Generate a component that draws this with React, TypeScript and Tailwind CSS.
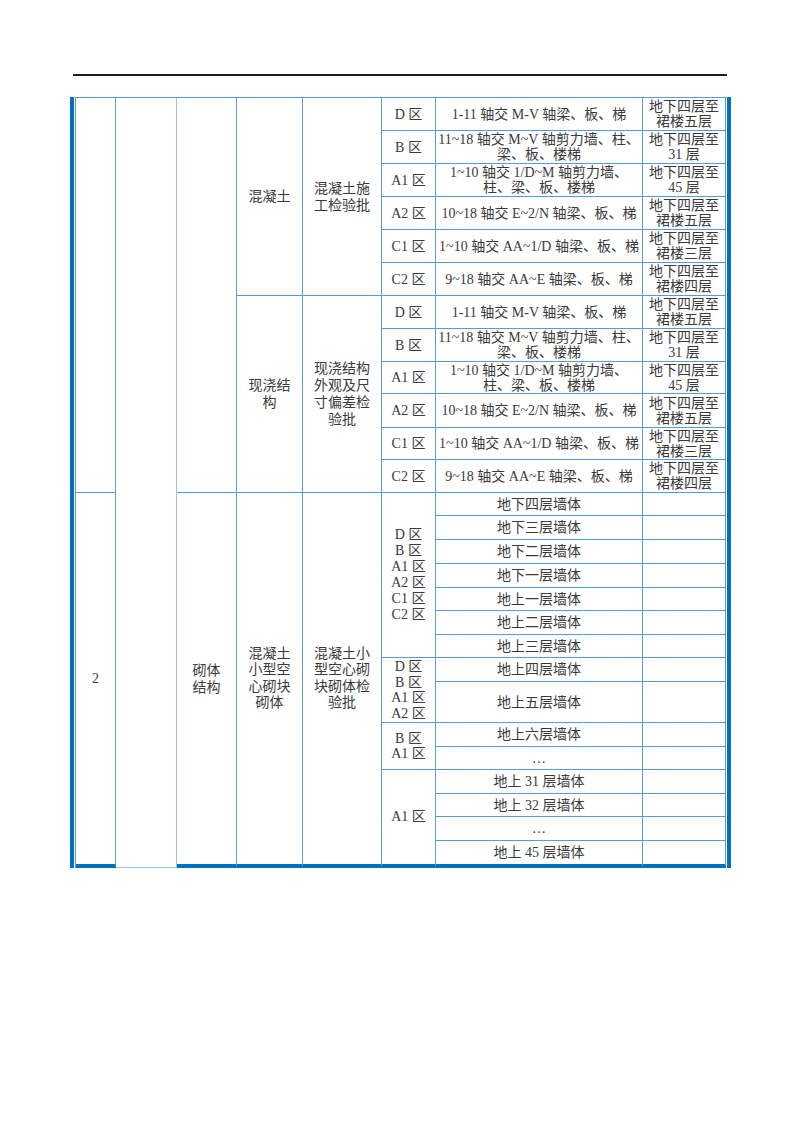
import React from "react";

interface ZoneRow {
  zone: string;
  scope: string[];
  floors: string[];
}

// the six zones repeat in both concrete groups
const zoneRows: ZoneRow[] = [
  { zone: "D 区", scope: ["1-11 轴交 M-V 轴梁、板、梯"], floors: ["地下四层至", "裙楼五层"] },
  { zone: "B 区", scope: ["11~18 轴交 M~V 轴剪力墙、柱、", "梁、板、楼梯"], floors: ["地下四层至", "31 层"] },
  { zone: "A1 区", scope: ["1~10 轴交 1/D~M 轴剪力墙、", "柱、梁、板、楼梯"], floors: ["地下四层至", "45 层"] },
  { zone: "A2 区", scope: ["10~18 轴交 E~2/N 轴梁、板、梯"], floors: ["地下四层至", "裙楼五层"] },
  { zone: "C1 区", scope: ["1~10 轴交 AA~1/D 轴梁、板、梯"], floors: ["地下四层至", "裙楼三层"] },
  { zone: "C2 区", scope: ["9~18 轴交 AA~E 轴梁、板、梯"], floors: ["地下四层至", "裙楼四层"] },
];

const groupHeights = [
  ["h-[33px]", "h-[33px]", "h-[33px]", "h-[33px]", "h-[33px]", "h-[33px]"],
  ["h-[33px]", "h-[33px]", "h-[32px]", "h-[34px]", "h-[32px]", "h-[33px]"],
];

// masonry rows: wall name, row height, optional zone cell (text lines + rowspan)
const wallRows: { wall: string; h: string; zone?: { lines: string[]; span: number } }[] = [
  { wall: "地下四层墙体", h: "h-[23px]", zone: { lines: ["D 区", "B 区", "A1 区", "A2 区", "C1 区", "C2 区"], span: 7 } },
  { wall: "地下三层墙体", h: "h-[24px]" },
  { wall: "地下二层墙体", h: "h-[24px]" },
  { wall: "地下一层墙体", h: "h-[24px]" },
  { wall: "地上一层墙体", h: "h-[23px]" },
  { wall: "地上二层墙体", h: "h-[24px]" },
  { wall: "地上三层墙体", h: "h-[23px]" },
  { wall: "地上四层墙体", h: "h-[24px]", zone: { lines: ["D 区", "B 区", "A1 区", "A2 区"], span: 2 } },
  { wall: "地上五层墙体", h: "h-[41px]" },
  { wall: "地上六层墙体", h: "h-[24px]", zone: { lines: ["B 区", "A1 区"], span: 2 } },
  { wall: "…", h: "h-[23px]" },
  { wall: "地上 31 层墙体", h: "h-[24px]", zone: { lines: ["A1 区"], span: 4 } },
  { wall: "地上 32 层墙体", h: "h-[23px]" },
  { wall: "…", h: "h-[24px]" },
  { wall: "地上 45 层墙体", h: "h-[27px]" },
];

const cell = "border-r border-b border-[#5b9bd5] p-0 text-center align-middle";
const lastCell = "border-r border-b-4 border-[#5b9bd5] border-b-[#0070c0] p-0 text-center align-middle";

function Lines({ items, lh = "leading-[15px]" }: { items: string[]; lh?: string }) {
  return (
    <div className={lh}>
      {items.map((t, i) => (
        <div key={i} className="whitespace-nowrap">
          {t}
        </div>
      ))}
    </div>
  );
}

export default function App() {
  return (
    <div className="min-h-[1132px] bg-white pt-[74px] text-[14px] text-[#3a3a3a] font-['Liberation_Serif','Noto_Sans_CJK_SC',serif]">
      <div className="ml-[73px] h-[2px] w-[654px] bg-[#1e1e1e]" />

      <div className="ml-[70px] mt-[21px] w-[661px] border-l-4 border-r-4 border-[#0070c0] px-px">
        <table className="w-[651px] table-fixed border-separate border-spacing-0 border-l border-t border-[#5b9bd5]">
          <colgroup>
            <col className="w-[40px]" />
            <col className="w-[61px]" />
            <col className="w-[60px]" />
            <col className="w-[66px]" />
            <col className="w-[79px]" />
            <col className="w-[54px]" />
            <col className="w-[207px]" />
            <col className="w-[83px]" />
          </colgroup>
          <tbody>
            {/* concrete: two groups of six zones */}
            {[0, 1].map((g) =>
              zoneRows.map((r, i) => (
                <tr key={`${g}-${i}`} className={groupHeights[g][i]}>
                  {g === 0 && i === 0 && (
                    <>
                      <td rowSpan={12} className={cell}></td>
                      <td rowSpan={27} className="border-r border-b border-[#9cc4ea] p-0"></td>
                      <td rowSpan={12} className={cell}></td>
                    </>
                  )}
                  {i === 0 && (
                    <>
                      <td rowSpan={6} className={`${cell} px-1`}>
                        {g === 0 ? <Lines items={["混凝土"]} lh="leading-[16px]" /> : <Lines items={["现浇结", "构"]} lh="leading-[17px]" />}
                      </td>
                      <td rowSpan={6} className={`${cell} px-1`}>
                        {g === 0 ? (
                          <Lines items={["混凝土施", "工检验批"]} lh="leading-[17px]" />
                        ) : (
                          <Lines items={["现浇结构", "外观及尺", "寸偏差检", "验批"]} lh="leading-[17px]" />
                        )}
                      </td>
                    </>
                  )}
                  <td className={cell}>{r.zone}</td>
                  <td className={cell}>
                    <Lines items={r.scope} />
                  </td>
                  <td className={cell}>
                    <Lines items={r.floors} />
                  </td>
                </tr>
              ))
            )}

            {/* masonry */}
            {wallRows.map((r, i) => {
              const last = i === wallRows.length - 1;
              const zoneLast = r.zone ? i + r.zone.span === wallRows.length : false;
              return (
                <tr key={`w-${i}`} className={r.h}>
                  {i === 0 && (
                    <>
                      <td rowSpan={15} className={lastCell}>2</td>
                      <td rowSpan={15} className={lastCell}>
                        <Lines items={["砌体", "结构"]} lh="leading-[17px]" />
                      </td>
                      <td rowSpan={15} className={lastCell}>
                        <Lines items={["混凝土", "小型空", "心砌块", "砌体"]} lh="leading-[16.5px]" />
                      </td>
                      <td rowSpan={15} className={lastCell}>
                        <Lines items={["混凝土小", "型空心砌", "块砌体检", "验批"]} lh="leading-[16.5px]" />
                      </td>
                    </>
                  )}
                  {r.zone && (
                    <td rowSpan={r.zone.span} className={zoneLast ? lastCell : cell}>
                      <Lines items={r.zone.lines} lh={r.zone.span === 7 ? "leading-[16px]" : "leading-[15.5px]"} />
                    </td>
                  )}
                  <td className={last ? lastCell : cell}>{r.wall}</td>
                  <td className={last ? lastCell : cell}></td>
                </tr>
              );
            })}
          </tbody>
        </table>
      </div>
    </div>
  );
}
